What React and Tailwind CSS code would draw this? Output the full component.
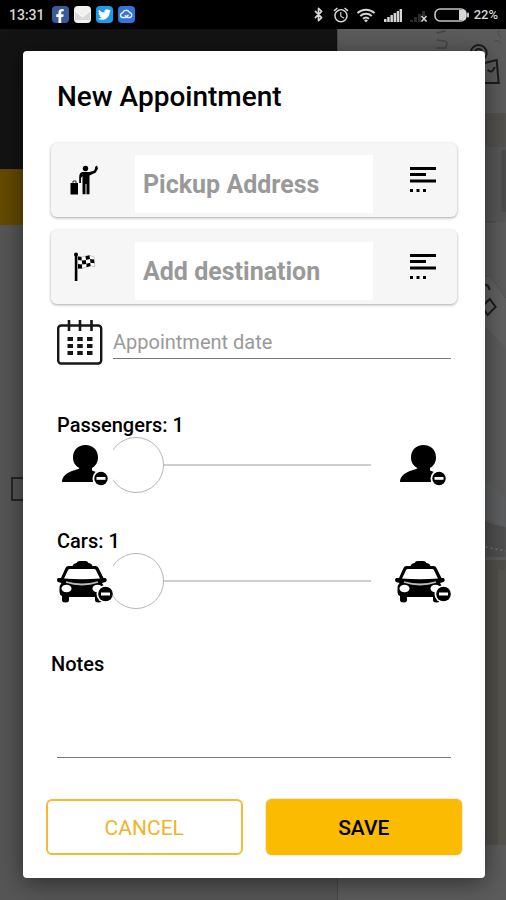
// App.jsx
import React, { useState } from 'react';
import { FaFacebookF, FaTwitter } from 'react-icons/fa';
import { Bluetooth } from 'lucide-react';
import { MdAlarm } from 'react-icons/md';

function StatusBar() {
  return (
    <header className="relative z-10 flex h-[29px] items-center justify-between bg-black pl-[9px] pr-2 text-[#d6d6d6]">
      <div className="flex items-center gap-[5px]">
        <span className="mr-0.5 text-sm font-medium">13:31</span>
        <span className="flex size-[17px] items-end justify-center overflow-hidden rounded-sm bg-[#3b5a9a]">
          <FaFacebookF size={14} color="#fff" />
        </span>
        <span className="size-[17px] overflow-hidden rounded-sm bg-[#f1f1f1]">
          <svg viewBox="0 0 17 17" className="size-full">
            <path d="M1 5l7.5 6L16 5v9H1z" fill="#d9d9d9" />
            <path d="M1 5l7.5 6L16 5" fill="none" stroke="#fff" />
          </svg>
        </span>
        <span className="flex size-[17px] items-center justify-center rounded-sm bg-[#1f9ae8]">
          <FaTwitter size={13} color="#fff" />
        </span>
        <span className="size-[17px] rounded-sm bg-[#3474d8]">
          <svg viewBox="0 0 17 17" className="size-full" fill="none" stroke="#e8f0ff" strokeWidth="1.4">
            <path d="M5 11.5a2.3 2.3 0 0 1-.3-4.6 3.7 3.7 0 0 1 6.9-.4 2.6 2.6 0 0 1 .5 5H9.5L7 9.2M5 11.5h2.5l3-2.8" />
          </svg>
        </span>
      </div>
      <div className="flex items-center gap-1">
        <Bluetooth size={15} strokeWidth={2.6} />
        <MdAlarm size={18} className="ml-0.5" />
        <svg viewBox="0 0 20 16" className="ml-0.5 h-4 w-5" fill="none" stroke="currentColor" strokeWidth="2">
          <path d="M1.500 6a12.500 12.500 0 0 1 17 0M4.300 9a8.500 8.500 0 0 1 11.400 0M7 11.800a4.500 4.500 0 0 1 6 0" />
          <path d="M10 15.500l-2-2.200a3 3 0 0 1 4 0z" fill="currentColor" stroke="none" />
        </svg>
        <svg viewBox="0 0 18 14" className="ml-1 h-3.5 w-[18px]" fill="currentColor">
          <path d="M0 11h2.500v3H0zM3.200 9h2.500v5H3.200zM6.400 7h2.500v7H6.400zM9.600 5h2.500v9H9.600zM12.700 3h2.300v11h-2.300zM15.600 1H18v13h-2.400z" />
        </svg>
        <svg viewBox="0 0 18 14" className="ml-1 h-3.5 w-[18px]">
          <path d="M0 12h3v2H0zM4 9h3v5H4zM8 6h3v8H8zM12 3h3v5h-3z" fill="#2c2c2c" />
          <path d="M11.500 8l5 5.500M16.500 8l-5 5.500" stroke="#d6d6d6" strokeWidth="1.600" />
        </svg>
        <svg viewBox="0 0 36 14" className="ml-0.5 h-3.5 w-9">
          <rect x="1" y="1" width="31" height="12" rx="5" fill="none" stroke="#c4c4c4" strokeWidth="1.600" />
          <path d="M25 2h5a2 2 0 0 1 2 2v6a2 2 0 0 1-2 2h-5z" fill="#d6d6d6" />
          <rect x="33" y="4.500" width="2" height="5" rx="1" fill="#c4c4c4" />
        </svg>
        <span className="text-[13px] font-medium">22%</span>
      </div>
    </header>
  );
}

// Dimmed screen that stays visible behind the dialog
function Backdrop() {
  return (
    <div className="absolute inset-0 flex" aria-hidden="true">
      <div className="flex w-2/3 flex-col bg-[#565656]">
        <div className="h-[169px] bg-[#131313]" />
        <div className="h-14 bg-[#644a00]" />
        <svg viewBox="0 0 40 26" className="mt-[251px] ml-2.5 h-[26px] w-10" fill="none" stroke="#262626" strokeWidth="2">
          <rect x="2" y="2" width="36" height="22" />
        </svg>
      </div>
      <div className="w-1/3 border-l border-[#474747] bg-[#5c5c5c]">
        <svg viewBox="0 0 168 900" preserveAspectRatio="xMaxYMin slice" className="size-full">
          <rect y="113" width="168" height="34" fill="#53514e" />
          <rect y="147" width="168" height="75" fill="#575757" />
          <path d="M164 150h4v62h-4z" fill="#4b4b4b" />
          <path d="M140 222h18M140 276h12l16 22" stroke="#484848" fill="none" />
          <path d="M140 278l12-2 16 22v50l-28-30z" fill="#626262" />
          <path d="M140 480q14 4 28 18v30l-28-15z" fill="#5d5f61" />
          <path d="M140 515q10 10 28 12v30h-28z" fill="#4f4f4f" />
          <path d="M148 547l20 4" stroke="#777" strokeWidth="1.500" strokeDasharray="2 3" />
          <path d="M140 560h28v285h-28z" fill="#514f4b" />
          <path d="M160 570h8v275h-8z" fill="#57544e" />
          <path d="M99 40l8 1q3 1 2 4l-1 3h-9M99 33l9-2" fill="none" stroke="#444" strokeWidth="1.500" />
          <path d="M162 30q-4 4 2 8M156 42q4-4 8 2" fill="none" stroke="#4b4b4b" />
          <g fill="none" stroke="#1c1c1c" strokeWidth="2">
            <circle cx="141" cy="53" r="8" />
            <circle cx="141" cy="53" r="4" />
            <path d="M147 63l12-3 2 23h-14M150 70q5 4 7-3" />
            <path d="M147 304l5-5 6 8-8 8-4-6M144 286q6-4 8 4" />
          </g>
        </svg>
      </div>
    </div>
  );
}

function HailIcon() {
  return (
    <svg viewBox="0 0 30 32" className="h-8 w-[30px]" fill="#000">
      <rect x="1.500" y="19" width="7.500" height="11.500" />
      <path d="M4 19v-2h3v2" fill="none" stroke="#000" strokeWidth=".8" />
      <circle cx="16.500" cy="4.500" r="2.700" />
      <path d="M13 8h7.500l4.500-1.300 1.500-3.500 1.800.5-1.300 4.800L20.500 11.500V30.300h-3V20h-1v10.300h-3V12l-1.500 2v5h-1.800v-6q0-4 2.800-5z" />
      <path d="M26 3l2-1.500 1 3-1.500 3z" />
    </svg>
  );
}

function FlagIcon() {
  return (
    <svg viewBox="0 0 30 32" className="h-8 w-[30px]" fill="#000">
      <circle cx="7" cy="3.500" r="2" />
      <rect x="5.800" y="3" width="2.600" height="27" />
      <path d="M9 5.500q4 1 8-.5t8 1l.8 10q-4-2.500-8-.2T9 17.500z" fill="#fff" stroke="#aaa" strokeWidth=".6" />
      <path d="M9 5.500l3.500.5.3 3.500L9 9zM16.500 5.300l4-1 .5 3.700-4 1zM12.800 9.500l4-.6.5 4-4 .6zM21 8l4 .6.500 3.600-4-.4zM9 13l4 .5.200 4H9zM17.300 12.800l4-1 .3 3.200-4 1.200z" />
    </svg>
  );
}

function LinesIcon() {
  return (
    <svg viewBox="0 0 26 28" className="h-7 w-[26px]" fill="#000">
      <path d="M0 1h26v3H0zM0 7h16v3H0zM0 13.500h26v3H0zM0 23h3v3H0zM6.500 23h3v3h-3zM13 23h3v3h-3z" />
    </svg>
  );
}

function CalendarIcon() {
  return (
    <svg viewBox="0 0 46 45" className="h-[45px] w-[46px] shrink-0" fill="none" stroke="#161616">
      <rect x="1.200" y="5.500" width="43" height="38" rx="3" strokeWidth="2.400" />
      <path d="M12 0v11M23 0v11M34.500 0v11" strokeWidth="2.600" />
      <path d="M10.500 19h25M10.500 26h25M10.500 33h25" strokeWidth="4" strokeDasharray="5.500 4.250" />
    </svg>
  );
}

function PersonIcon() {
  return (
    <svg viewBox="0 0 56 56" className="size-14 shrink-0" fill="#000">
      <path d="M28.500 8c7.500 0 12.500 5 12.500 12.500 0 5-2.500 8.500-6 10.500v2.500l9 3.500v8H5c0-6 5-9 10-11 3-1.200 6.500-1.500 7.500-3-4-2-6.500-5.500-6.500-10.500C16 13 21 8 28.500 8z" />
      <circle cx="44" cy="41.500" r="8.500" fill="#fff" />
      <circle cx="44" cy="41.500" r="6.700" />
      <rect x="39.500" y="40" width="9" height="2.800" fill="#fff" />
    </svg>
  );
}

function TaxiIcon() {
  return (
    <svg viewBox="0 0 56 56" className="size-14 shrink-0" fill="#000">
      <path d="M15.500 14q0-3.500 4-4 1-2 3-2h6q2 0 3 2 4 .5 4 4z" />
      <path d="M11.500 13h27q2 0 3 2l5 10h2q2.500 2 0 4l-3.500 1q2 2 2 6v7q0 2-2 2v2q0 2.500-3.500 2.500T38 47v-3H12v3q0 2.500-3.500 2.500T5 47v-4q-2.500-1-2.500-4v-3q0-4 2-6L1 29q-2-2 0-4h3l4.500-10q1-2 3-2z" />
      <path d="M13 16h24q1.500 0 2 1.200l4 8.300q-18 1.500-36 0l4-8.300q.5-1.200 2-1.200z" fill="#fff" />
      <path d="M9 29q16 5 32 0" fill="none" stroke="#bbb" strokeWidth="1.800" />
      <ellipse cx="9.500" cy="35.500" rx="5" ry="3.800" fill="#fff" />
      <ellipse cx="40.500" cy="35.500" rx="5" ry="3.800" fill="#fff" />
      <circle cx="48.500" cy="41" r="9" fill="#fff" />
      <circle cx="48.500" cy="41" r="7.300" />
      <rect x="44" y="39.500" width="9" height="3" fill="#fff" />
    </svg>
  );
}

function AddressCard({ icon, label, value, onChange }) {
  return (
    <div className="grid grid-cols-[84px_1fr_84px] items-center rounded-md bg-[#f6f6f6] shadow-[0_1px_3px_rgba(0,0,0,0.35)]">
      <span className="pl-[18px]">{icon}</span>
      <input
        className="mt-3 mb-1 h-[58px] w-full min-w-0 bg-white px-2 text-[25px] font-bold outline-none placeholder:text-[#999]"
        aria-label={label}
        placeholder={label}
        value={value}
        onChange={e => onChange(e.target.value)}
      />
      <button type="button" aria-label={`${label} options`} className="justify-self-end pr-[21px]">
        <LinesIcon />
      </button>
    </div>
  );
}

function CountSlider({ id, label, icon, value, onChange }) {
  return (
    <div>
      <label htmlFor={id} className="block text-xl leading-6 font-medium">{label}: {value}</label>
      <div className="flex items-center">
        {icon}
        <div className="min-w-0 flex-1 overflow-hidden pr-6">
          <input
            id={id}
            type="range"
            min="1"
            max="8"
            value={value}
            onChange={e => onChange(Number(e.target.value))}
            className="-ml-[5px] block h-14 w-[calc(100%+5px)] appearance-none bg-transparent outline-none [&::-webkit-slider-runnable-track]:h-0.5 [&::-webkit-slider-runnable-track]:bg-[#cfcfcf] [&::-webkit-slider-thumb]:-mt-[27px] [&::-webkit-slider-thumb]:size-14 [&::-webkit-slider-thumb]:appearance-none [&::-webkit-slider-thumb]:rounded-full [&::-webkit-slider-thumb]:border [&::-webkit-slider-thumb]:border-[#b4b4b4] [&::-webkit-slider-thumb]:bg-white"
          />
        </div>
        {icon}
      </div>
    </div>
  );
}

export default function App() {
  const [pickup, setPickup] = useState('');
  const [destination, setDestination] = useState('');
  const [date, setDate] = useState('');
  const [passengers, setPassengers] = useState(1);
  const [cars, setCars] = useState(1);
  const [notes, setNotes] = useState('');

  return (
    <div className="relative min-h-screen bg-[#505050] font-[Roboto,sans-serif] text-black">
      <Backdrop />
      <StatusBar />

      <form
        role="dialog"
        aria-labelledby="dialog-title"
        onSubmit={e => e.preventDefault()}
        className="relative mt-[22px] mr-[21px] mb-[22px] ml-[23px] rounded-sm bg-white pt-[26px] pb-[23px] shadow-[0_4px_24px_rgba(0,0,0,0.5)]"
      >
        <h1 id="dialog-title" className="px-[34px] text-[28px] leading-10 font-medium">New Appointment</h1>

        <div className="mt-[26px] flex flex-col gap-[13px] px-7">
          <AddressCard icon={<HailIcon />} label="Pickup Address" value={pickup} onChange={setPickup} />
          <AddressCard icon={<FlagIcon />} label="Add destination" value={destination} onChange={setDestination} />
        </div>

        <div className="mt-4 flex items-center gap-2.5 px-[34px]">
          <CalendarIcon />
          <input
            className="h-8 min-w-0 flex-1 border-b border-[#777] text-xl outline-none placeholder:text-[#999]"
            aria-label="Appointment date"
            placeholder="Appointment date"
            value={date}
            onChange={e => setDate(e.target.value)}
          />
        </div>

        <div className="mt-12 flex flex-col gap-9 px-[34px]">
          <CountSlider id="passengers" label="Passengers" icon={<PersonIcon />} value={passengers} onChange={setPassengers} />
          <CountSlider id="cars" label="Cars" icon={<TaxiIcon />} value={cars} onChange={setCars} />
        </div>

        <div className="mt-[43px]">
          <label htmlFor="notes" className="block px-7 text-xl leading-6 font-medium">Notes</label>
          <div className="px-[34px]">
            <textarea
              id="notes"
              className="block h-[82px] w-full resize-none border-b border-[#777] pt-10 text-xl outline-none"
              value={notes}
              onChange={e => setNotes(e.target.value)}
            />
          </div>
        </div>

        <div className="mt-[41px] grid grid-cols-2 gap-[23px] px-[23px]">
          <button type="button" className="h-14 rounded-md border-2 border-[#f9b934] pt-1 text-[21px] text-[#f3b229]">CANCEL</button>
          <button type="submit" className="h-14 rounded-md bg-[#fabb00] pt-1 text-[21px] font-medium shadow-[0_0_2px_rgba(0,0,0,0.3)]">SAVE</button>
        </div>
      </form>
    </div>
  );
}
